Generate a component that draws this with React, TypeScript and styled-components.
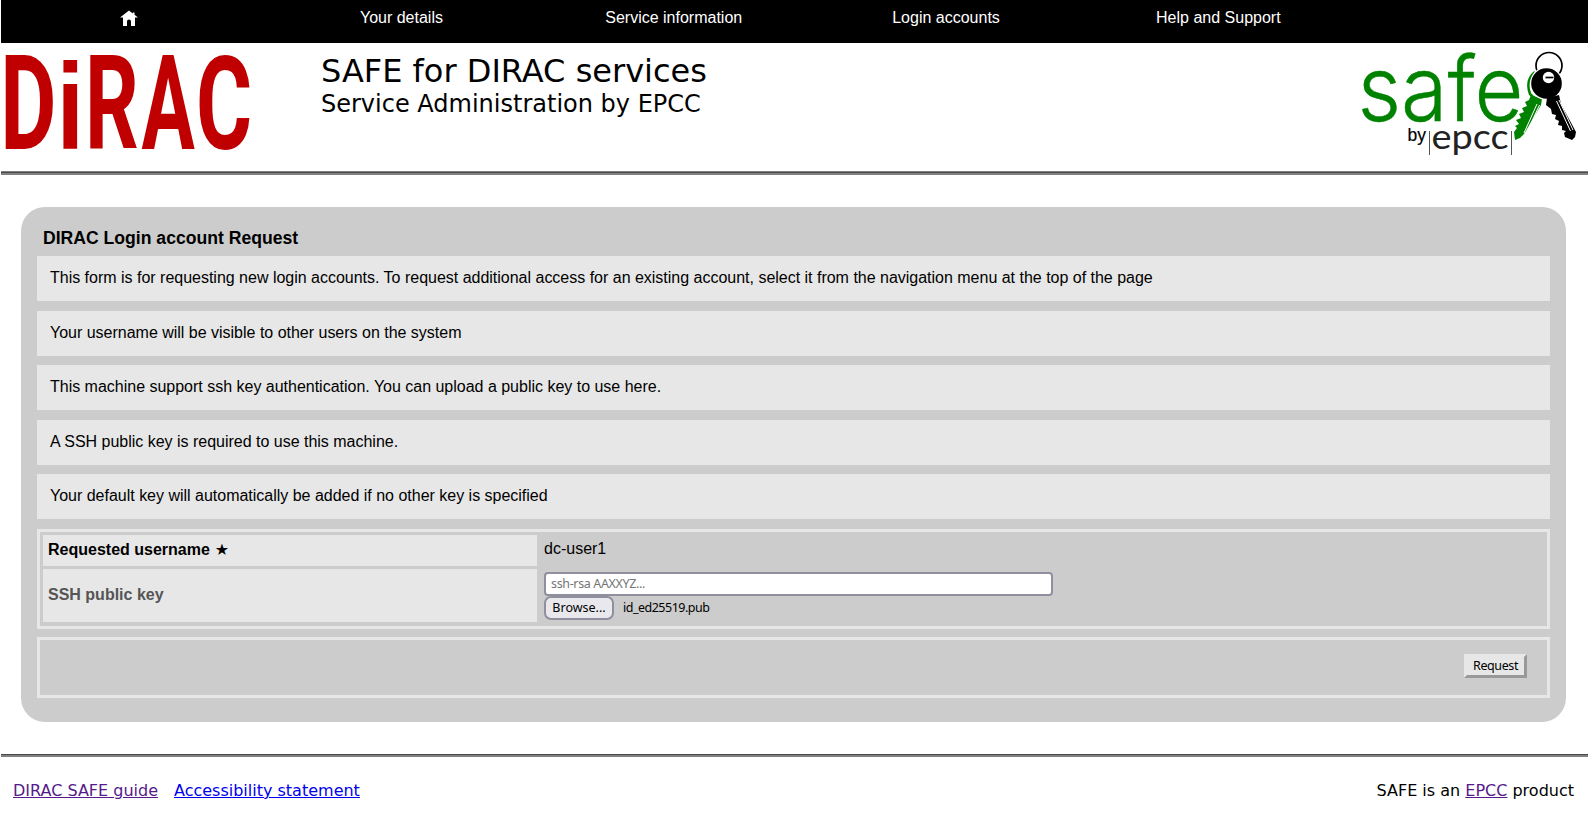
import React from 'react';
import styled, { createGlobalStyle } from 'styled-components';

const sans = '"Liberation Sans", Arial, sans-serif';
const dejavu = '"DejaVu Sans", Verdana, sans-serif';
const control = '"Noto Sans", "Open Sans", sans-serif';

const GlobalStyle = createGlobalStyle`
  *, *::before, *::after { box-sizing: border-box; }
  body { margin: 0; background: #fff; color: #000; font: 16px/19px ${sans}; }
`;

const Page = styled.div`
  display: flex;
  flex-direction: column;
  height: 826px;
  padding-left: 1px;
  overflow: hidden;
`;

const Nav = styled.nav`
  display: grid;
  grid-template-columns: repeat(5, 256.3px);
  column-gap: 16px;
  flex: none;
  height: 43px;
  padding-top: 8px;
  background: #000;
`;

const NavItem = styled.a`
  display: block;
  height: 20px;
  color: #fff;
  line-height: 20px;
  text-align: center;
`;

const HomeIcon = styled.svg`
  display: block;
  width: 18px;
  height: 16px;
  margin: 2px auto 0;
`;

const Header = styled.header`
  display: flex;
  flex: none;
  height: 128px;
  padding: 0 8px 0 0;
`;

const DiracLogo = styled.svg`
  flex: none;
  width: 320px;
  height: 124px;
  overflow: visible;
`;

const Titles = styled.div`
  flex: 1;
  padding-top: 9px;
  font-family: ${dejavu};
`;

const Title = styled.h1`
  margin: 0;
  font-size: 32px;
  font-weight: 400;
  line-height: 38px;
`;

const Subtitle = styled.h2`
  margin: 0;
  font-size: 24px;
  font-weight: 400;
  line-height: 29px;
`;

const SafeLogo = styled.svg`
  flex: none;
  width: 228px;
  height: 124px;
  overflow: visible;
`;

const Rule = styled.hr<{ $top: number }>`
  flex: none;
  width: 100%;
  height: ${(p) => p.$top + 3}px;
  margin: 0;
  border: solid #808080;
  border-width: ${(p) => p.$top}px 0 2px;
  background: #4a4a4a;
`;

const Panel = styled.main`
  flex: none;
  width: 1545px;
  height: 515px;
  margin: 32px 0 32px 20px;
  padding: 20px 16px 0;
  border-radius: 24px;
  background: #ccc;
`;

const PanelTitle = styled.h3`
  margin: 0 0 7px;
  padding-left: 6px;
  font-size: 17.6px;
  line-height: 22px;
`;

const Notice = styled.p`
  height: 45px;
  margin: 0 0 9.5px;
  padding: 12px 13px;
  background: #e7e7e7;
  line-height: 19px;
  letter-spacing: -0.01px;
`;

const Framed = styled.section`
  border: 3px solid #e7e7e7;
`;

const FieldTable = styled(Framed)`
  display: grid;
  grid-template-columns: 494px 1fr;
  grid-template-rows: 31px 53px;
  gap: 3px 7px;
  height: 100px;
  padding: 3px;
`;

const Label = styled.div<{ $optional?: boolean }>`
  display: flex;
  align-items: center;
  padding: 0 5px 2px;
  background: #e7e7e7;
  color: ${(p) => (p.$optional ? '#555' : '#000')};
  font-weight: 700;
`;

const Star = styled.span`
  margin-left: 5px;
  font: 16px/19px ${dejavu};
`;

const Value = styled.div`
  padding-top: 4px;
`;

const KeyValue = styled.div`
  padding-top: 3px;
`;

const KeyInput = styled.input`
  display: block;
  width: 509px;
  height: 24px;
  padding: 0 5px;
  border: 2px solid #8f8f9d;
  border-radius: 4px;
  background: #fff;
  font: 12.5px/18px ${control};
  letter-spacing: -0.35px;
  &::placeholder { color: #757575; opacity: 1; }
`;

const FileRow = styled.div`
  display: flex;
  align-items: center;
  gap: 9px;
  font: 12.5px/18px ${control};
`;

const Browse = styled.button`
  width: 70px;
  height: 24px;
  padding: 0;
  border: 2px solid #8f8f9d;
  border-radius: 7px;
  background: #e9e9ed;
  color: #000;
  font: 12.5px/18px ${control};
`;

const FileName = styled.span`
  letter-spacing: -0.5px;
`;

const Actions = styled(Framed)`
  display: flex;
  justify-content: flex-end;
  height: 61px;
  margin-top: 8px;
  padding: 14px 20px 0 0;
`;

const RequestButton = styled.button`
  width: 63px;
  height: 24px;
  padding: 0;
  border: 3px solid;
  border-color: #e7e7e7 #999 #999 #e7e7e7;
  background: #e7e7e7;
  color: #000;
  font: 12.5px/17px ${control};
  letter-spacing: -0.4px;
`;

const Footer = styled.footer`
  display: flex;
  justify-content: space-between;
  padding: 24px 14px 0 12px;
  font: 16px/20px ${dejavu};
`;

const FooterLinks = styled.div`
  display: flex;
  gap: 16px;
`;

const Link = styled.a<{ $visited?: boolean }>`
  color: ${(p) => (p.$visited ? '#551a8b' : '#0000ee')};
  text-decoration: underline;
`;

const navItems = ['Your details', 'Service information', 'Login accounts', 'Help and Support'];

const notices = [
  'This form is for requesting new login accounts. To request additional access for an existing account, select it from the navigation menu at the top of the page',
  'Your username will be visible to other users on the system',
  'This machine support ssh key authentication. You can upload a public key to use here.',
  'A SSH public key is required to use this machine.',
  'Your default key will automatically be added if no other key is specified',
];

// letter, x, horizontal scale, vertical scale, family
const diracLetters: [string, number, number, number, string][] = [
  ['D', 0.2, 0.66, 1, 'Roboto'],
  ['i', 56.6, 0.76, 0.93, 'Liberation Sans'],
  ['R', 85, 0.64, 1, 'Roboto'],
  ['A', 141.5, 0.605, 1, 'Roboto'],
  ['C', 196, 0.655, 0.99, 'Roboto'],
];

const Dirac = () => (
  <DiracLogo viewBox="1 43 320 124">
    <g fill="#c00000" fontWeight="700" fontSize="131">
      {diracLetters.map(([c, x, sx, sy, family]) => (
        <text key={c} fontFamily={family} transform={`translate(${x} 149) scale(${sx} ${sy})`}>{c}</text>
      ))}
    </g>
  </DiracLogo>
);

const Safe = () => (
  <SafeLogo viewBox="1352 43 228 124">
    <text x="1357.500" y="121" fill="#008200" stroke="#008200" strokeWidth=".4" fontFamily="Inter" fontWeight="300" fontSize="90" textLength="166" lengthAdjust="spacingAndGlyphs">safe</text>
    <text x="1407.500" y="140.500" stroke="#000" strokeWidth=".2" fontFamily="Liberation Sans" fontSize="18" textLength="18.500" lengthAdjust="spacingAndGlyphs">by</text>
    <text x="1431.500" y="149" fill="#222" fontFamily="Lato" fontWeight="400" fontSize="34" textLength="77" lengthAdjust="spacingAndGlyphs">epcc</text>
    <path d="M1429.500 131v24M1511.500 131v24" stroke="#555" strokeWidth="1" />
    <path d="M1535 72Q1525 80 1530 94l4 4" fill="none" stroke="#008200" strokeWidth="2.500" />
    <path d="M1531 95l11 4-1 6-17 29-4 4-5 2-1-8 3-4-2-2 4-2-3-4 5-2-2-4 5-2-2-4 5-2-2-4 4-2z" fill="#008200" />
    <path d="M1537 104l-13 29M1539.500 105l-13 28" stroke="#fff" strokeWidth="1" />
    <circle cx="1549" cy="65.500" r="13" fill="none" stroke="#000" strokeWidth="1.700" />
    <circle cx="1546.500" cy="83.500" r="16.500" fill="#fff" />
    <circle cx="1546.500" cy="83.500" r="15.300" fill="#000" />
    <circle cx="1548.500" cy="77.500" r="5.700" fill="#fff" />
    <path d="M1545.500 77.500h8" fill="none" stroke="#000" strokeWidth="1.700" />
    <path d="M1547 98l12-3 2 9 15 28-1 5-3 3-7-3-1-4 2-2-4-1v-4l-4-1 1-4-4-2 1-4-4-1-1-5-5-4z" />
    <path d="M1556.500 101l14 30M1559 100l14 30" stroke="#fff" strokeWidth="1" />
  </SafeLogo>
);

export default function App() {
  return (
    <>
      <GlobalStyle />
      <Page>
        <Nav>
          <NavItem>
            <HomeIcon viewBox="0 0 18 16">
              <path fill="#fff" d="M9 .5L0 7.500h3V16h4v-4.500q0-2 2-2t2 2V16h4V7.500h3L14.500 4.800V2.500h-1.800v1z" />
            </HomeIcon>
          </NavItem>
          {navItems.map((item) => <NavItem key={item}>{item}</NavItem>)}
        </Nav>
        <Header>
          <Dirac />
          <Titles>
            <Title>SAFE for DIRAC services</Title>
            <Subtitle>Service Administration by EPCC</Subtitle>
          </Titles>
          <Safe />
        </Header>
        <Rule $top={1} />
        <Panel>
          <PanelTitle>DIRAC Login account Request</PanelTitle>
          {notices.map((n) => <Notice key={n}>{n}</Notice>)}
          <FieldTable>
            <Label>Requested username <Star>★</Star></Label>
            <Value>dc-user1</Value>
            <Label $optional>SSH public key</Label>
            <KeyValue>
              <KeyInput placeholder="ssh-rsa AAXXYZ..." />
              <FileRow>
                <Browse>Browse...</Browse>
                <FileName>id_ed25519.pub</FileName>
              </FileRow>
            </KeyValue>
          </FieldTable>
          <Actions>
            <RequestButton>Request</RequestButton>
          </Actions>
        </Panel>
        <Rule $top={0} />
        <Footer>
          <FooterLinks>
            <Link $visited>DIRAC SAFE guide</Link>
            <Link>Accessibility statement</Link>
          </FooterLinks>
          <span>SAFE is an <Link $visited>EPCC</Link> product</span>
        </Footer>
      </Page>
    </>
  );
}
